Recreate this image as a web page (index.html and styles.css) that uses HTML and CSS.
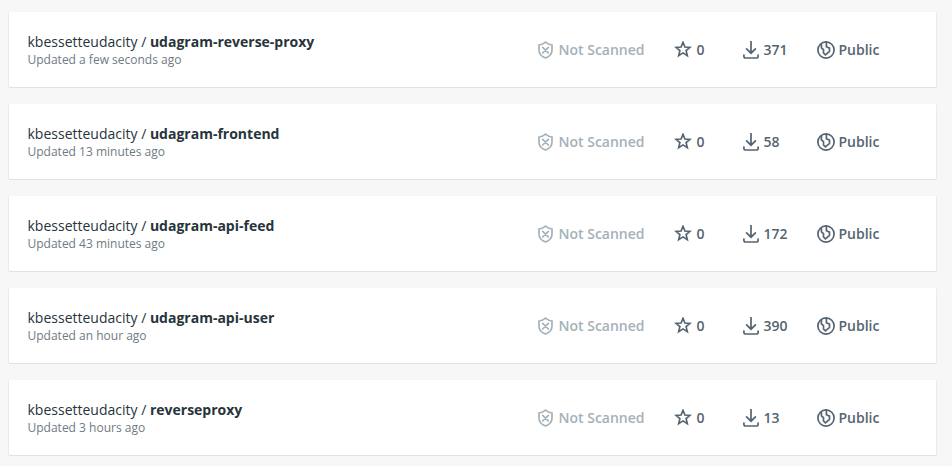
FILE: index.html
```
<!DOCTYPE html>
<html lang="en">
<head>
<meta charset="utf-8">
<title>Repositories</title>
<link rel="stylesheet" href="styles.css">
</head>
<body>
<svg class="sprite" aria-hidden="true">
  <symbol id="shield" viewBox="0 0 18 18"><path d="M8.5 1.1C6.7 2.6 4.2 3.8 2 4V9.2C2 13 4.8 15.6 8.5 17C12.2 15.6 15 13 15 9.2V4C12.8 3.8 10.3 2.6 8.5 1.1Z"/><path d="M5.7 6.4L11.3 12M11.3 6.4L5.7 12"/></symbol>
  <symbol id="star" viewBox="0 0 18 18"><path d="M9 1.3L10.9 6L16 6.4L12.1 9.6L13.3 14.6L9 11.9L4.7 14.6L5.9 9.6L2 6.4L7.1 6Z"/></symbol>
  <symbol id="download" viewBox="0 0 18 18"><path d="M9 0V12M4.6 7.8L9 12.2L13.4 7.8M1.9 14V15.3Q1.9 17 3.6 17H14.4Q16.1 17 16.1 15.3V14"/></symbol>
  <symbol id="globe" viewBox="0 0 18 18"><circle cx="9" cy="9" r="8.1"/><path class="land" d="M4.4 3.3V6.8L6.5 8.6V12L8.4 13.9L12.5 10.4V7.1L9.4 5.8V1.4"/></symbol>
</svg>
<main class="list">
  <article class="card">
    <div class="info"><div class="name">kbessetteudacity / <strong>udagram-reverse-proxy</strong></div><div class="updated">Updated a few seconds ago</div></div>
    <div class="stat scan"><svg><use href="#shield"/></svg><span>Not Scanned</span></div>
    <div class="stat stars"><svg><use href="#star"/></svg><span>0</span></div>
    <div class="stat pulls"><svg><use href="#download"/></svg><span>371</span></div>
    <div class="stat access"><svg><use href="#globe"/></svg><span>Public</span></div>
  </article>
  <article class="card">
    <div class="info"><div class="name">kbessetteudacity / <strong>udagram-frontend</strong></div><div class="updated">Updated 13 minutes ago</div></div>
    <div class="stat scan"><svg><use href="#shield"/></svg><span>Not Scanned</span></div>
    <div class="stat stars"><svg><use href="#star"/></svg><span>0</span></div>
    <div class="stat pulls"><svg><use href="#download"/></svg><span>58</span></div>
    <div class="stat access"><svg><use href="#globe"/></svg><span>Public</span></div>
  </article>
  <article class="card">
    <div class="info"><div class="name">kbessetteudacity / <strong>udagram-api-feed</strong></div><div class="updated">Updated 43 minutes ago</div></div>
    <div class="stat scan"><svg><use href="#shield"/></svg><span>Not Scanned</span></div>
    <div class="stat stars"><svg><use href="#star"/></svg><span>0</span></div>
    <div class="stat pulls"><svg><use href="#download"/></svg><span>172</span></div>
    <div class="stat access"><svg><use href="#globe"/></svg><span>Public</span></div>
  </article>
  <article class="card">
    <div class="info"><div class="name">kbessetteudacity / <strong>udagram-api-user</strong></div><div class="updated">Updated an hour ago</div></div>
    <div class="stat scan"><svg><use href="#shield"/></svg><span>Not Scanned</span></div>
    <div class="stat stars"><svg><use href="#star"/></svg><span>0</span></div>
    <div class="stat pulls"><svg><use href="#download"/></svg><span>390</span></div>
    <div class="stat access"><svg><use href="#globe"/></svg><span>Public</span></div>
  </article>
  <article class="card">
    <div class="info"><div class="name">kbessetteudacity / <strong>reverseproxy</strong></div><div class="updated">Updated 3 hours ago</div></div>
    <div class="stat scan"><svg><use href="#shield"/></svg><span>Not Scanned</span></div>
    <div class="stat stars"><svg><use href="#star"/></svg><span>0</span></div>
    <div class="stat pulls"><svg><use href="#download"/></svg><span>13</span></div>
    <div class="stat access"><svg><use href="#globe"/></svg><span>Public</span></div>
  </article>
</main>
</body>
</html>
```
FILE: styles.css
```
* { box-sizing: border-box; }
body {
  margin: 0;
  background: #f7f7f7;
  color: #27343b;
  font-family: "Open Sans", sans-serif;
  font-size: 14px;
}
.sprite { display: none; }
.list {
  display: flex;
  flex-direction: column;
  gap: 16px;
  padding: 12px 15px 10px 8px;
}
.card {
  display: grid;
  grid-template-columns: 509px 137px 68px 75px 1fr;
  align-items: center;
  height: 76px;
  padding-left: 18.5px;
  background: #fff;
  border: 1px solid #e9eaeb;
  border-top-color: #fff;
  border-bottom-color: #dfe1e3;
  border-radius: 2px;
}
.name { line-height: 20px; white-space: nowrap; }
.name strong { font-weight: 700; }
.updated {
  color: #6f7a82;
  font-size: 12px;
  line-height: 16px;
}
.stat {
  display: flex;
  align-items: center;
  gap: 4px;
  color: #556471;
  font-weight: 600;
  line-height: 20px;
  white-space: nowrap;
}
.stat svg {
  width: 18px;
  height: 18px;
  fill: none;
  stroke: currentColor;
  stroke-width: 1.7;
  stroke-linecap: round;
}
.scan { color: #a5b1b9; }
.scan svg { stroke-width: 1.7; }
.stars { gap: 5px; }
.land { stroke-width: 1.7; }
```
